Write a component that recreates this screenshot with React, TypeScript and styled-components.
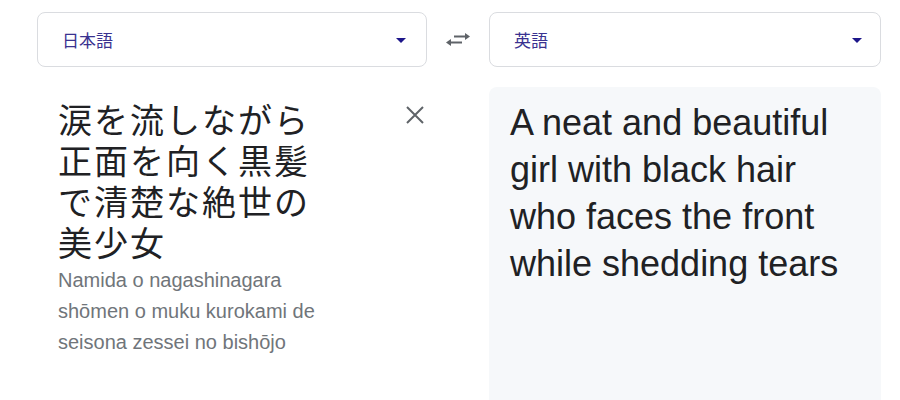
import React from "react";
import styled, { createGlobalStyle } from "styled-components";

const Global = createGlobalStyle`
  html, body { margin: 0; padding: 0; background: #ffffff; }
  body { font-family: "Liberation Sans", Arial, "Noto Sans CJK JP", sans-serif; overflow: hidden; }
`;

const Page = styled.div`
  display: grid;
  grid-template-columns: 390px 62px 392px;
  grid-template-rows: 55px auto;
  row-gap: 20px;
  padding: 12px 0 0 37px;
  width: 900px;
  height: 400px;
  box-sizing: border-box;
`;

const Selector = styled.div<{ $arrowRight: number }>`
  display: flex;
  align-items: center;
  justify-content: space-between;
  border: 1px solid #dadce0;
  border-radius: 8px;
  padding: 0 ${(p) => p.$arrowRight}px 0 24px;
  box-sizing: border-box;
`;

const LangLabel = styled.span`
  font-family: "Noto Sans CJK JP", sans-serif;
  font-size: 17px;
  color: #3a3290;
  line-height: 1;
`;

const Caret = styled.span`
  width: 0;
  height: 0;
  border-left: 5px solid transparent;
  border-right: 5px solid transparent;
  border-top: 5px solid #1d168a;
  margin-top: 2px;
`;

const SwapCell = styled.div`
  display: flex;
  align-items: center;
  justify-content: center;
`;

const SourcePanel = styled.div`
  position: relative;
  padding: 11px 0 0 21px;
`;

const SourceText = styled.div`
  font-family: "Noto Sans CJK JP", sans-serif;
  font-size: 34px;
  line-height: 41px;
  color: #202124;
  width: 266px;
  letter-spacing: 2px;
`;

const Romaji = styled.div`
  margin-top: 3px;
  font-family: "Liberation Sans", Arial, sans-serif;
  font-size: 20px;
  line-height: 31px;
  color: #70757a;
  width: 300px;
`;

const CloseButton = styled.button`
  position: absolute;
  top: 16px;
  right: 0px;
  width: 24px;
  height: 24px;
  padding: 0;
  border: 0;
  background: transparent;
  display: flex;
  align-items: center;
  justify-content: center;
`;

const TargetPanel = styled.div`
  grid-column: 3;
  background: #f6f8fa;
  border-radius: 8px 8px 0 0;
  padding: 12px 0 0 21px;
  min-height: 320px;
`;

const TargetText = styled.div`
  font-family: "Liberation Sans", Arial, sans-serif;
  font-size: 36px;
  line-height: 47px;
  color: #202124;
  width: 340px;
`;

function SwapIcon() {
  return (
    <svg width="26" height="14" viewBox="0 0 26 14">
      <path d="M9 3.5 H21" stroke="#5f6368" strokeWidth="2" fill="none" />
      <path d="M20 0 L25 3.5 L20 7 Z" fill="#5f6368" />
      <path d="M6 9.5 H17" stroke="#5f6368" strokeWidth="2" fill="none" />
      <path d="M6 6 L1 9.5 L6 13 Z" fill="#5f6368" />
    </svg>
  );
}

function CloseIcon() {
  return (
    <svg width="20" height="20" viewBox="0 0 20 20">
      <path d="M2 2 L18 18 M18 2 L2 18" stroke="#5f6368" strokeWidth="2" fill="none" />
    </svg>
  );
}

export default function App() {
  return (
    <>
      <Global />
      <Page>
        <Selector $arrowRight={20}>
          <LangLabel>日本語</LangLabel>
          <Caret />
        </Selector>
        <SwapCell>
          <SwapIcon />
        </SwapCell>
        <Selector $arrowRight={18}>
          <LangLabel>英語</LangLabel>
          <Caret />
        </Selector>
        <SourcePanel>
          <SourceText>涙を流しながら正面を向く黒髪で清楚な絶世の美少女</SourceText>
          <Romaji>
            Namida o nagashinagara shōmen o muku kurokami de seisona zessei no bishōjo
          </Romaji>
          <CloseButton aria-label="clear">
            <CloseIcon />
          </CloseButton>
        </SourcePanel>
        <TargetPanel>
          <TargetText>
            A neat and beautiful girl with black hair who faces the front while shedding tears
          </TargetText>
        </TargetPanel>
      </Page>
    </>
  );
}
